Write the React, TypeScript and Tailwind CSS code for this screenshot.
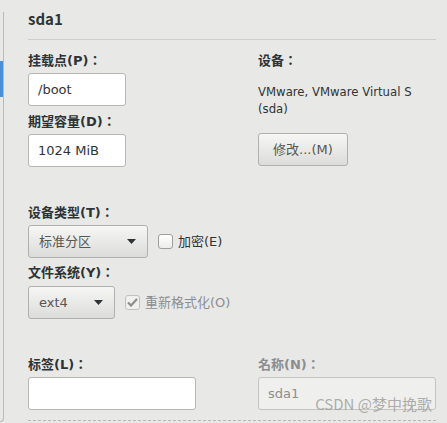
import React from "react";

const font = { fontFamily: '"DejaVu Sans", "Noto Sans CJK SC", sans-serif' };
const labelFont = { fontFamily: '"DejaVu Sans", "Noto Sans CJK JP", sans-serif' };
const cjkFont = { fontFamily: '"Noto Sans CJK SC", sans-serif' };

function Label({ children, muted }: { children: React.ReactNode; muted?: boolean }) {
  return (
    <div
      style={labelFont}
      className={`h-[18px] text-[13px] leading-[18px] font-bold ${muted ? "text-[#8b8e8f]" : "text-[#2e3436]"}`}
    >
      {children}
    </div>
  );
}

function Entry({ value, width, disabled }: { value: string; width: string; disabled?: boolean }) {
  return (
    <div
      className={`${width} flex h-[33px] items-center rounded-[3px] border px-[9px] text-[13px] ${
        disabled
          ? "border-[#c4c4c1] bg-[#efefee] text-[#8b8e8f]"
          : "border-[#b6b6b3] bg-white text-[#2e3436]"
      }`}
    >
      {value}
    </div>
  );
}

function Combo({ value, width }: { value: string; width: string }) {
  return (
    <div
      className={`${width} flex h-[33px] items-center justify-between rounded-[3px] border border-[#b0b0ad] bg-gradient-to-b from-[#f6f6f5] to-[#dcdcda] pl-[10px] pr-[11px] text-[13px] text-[#555753]`}
    >
      <span>{value}</span>
      <svg width="9" height="5" viewBox="0 0 9 5">
        <path d="M0 0h9L4.5 5z" fill="#2e3436" />
      </svg>
    </div>
  );
}

function Check({ checked, label }: { checked?: boolean; label: string }) {
  return (
    <div className="flex items-center gap-[5px]">
      <div
        className={`flex h-[15px] w-[15px] items-center justify-center rounded-[3px] border ${
          checked ? "border-[#c0c0bd] bg-[#f0f0ef]" : "border-[#9e9e9b] bg-gradient-to-b from-white to-[#ececea]"
        }`}
      >
        {checked && (
          <svg width="11" height="9" viewBox="0 0 11 9">
            <path d="M1 4.5l3 3L10 1" stroke="#8b8e8f" strokeWidth="2.2" fill="none" />
          </svg>
        )}
      </div>
      <span className={`text-[13px] ${checked ? "text-[#8b8e8f]" : "text-[#2e3436]"}`}>{label}</span>
    </div>
  );
}

export default function App() {
  return (
    <div className="relative flex h-[423px] w-[447px] overflow-hidden bg-[#e8e8e7]" style={font}>
      <div className="mt-[12px] h-[410px] w-[4px] rounded-br-[4px] border-r border-b border-[#b9b9b6]">
        <div className="mt-[49px] h-[36px] w-[3px] bg-[#4a90d9]" />
      </div>

      <main className="flex flex-1 flex-col pl-[24px] pr-[11px]">
        <h1 style={cjkFont} className="mt-[9px] h-[20px] text-[15px] leading-[20px] font-bold text-[#2e3436]">
          sda1
        </h1>
        <div className="mt-[10px] h-px bg-[#cdcdca]" />

        <div className="mt-[12px] flex">
          <div className="w-[230px]">
            <Label>挂载点(P)：</Label>
            <div className="mt-[3px]">
              <Entry value="/boot" width="w-[98px]" />
            </div>
            <div className="mt-[7px]">
              <Label>期望容量(D)：</Label>
            </div>
            <div className="mt-[3px]">
              <Entry value="1024 MiB" width="w-[98px]" />
            </div>
          </div>
          <div className="flex-1">
            <Label>设备：</Label>
            <p className="mt-[14px] text-[11.7px] leading-[17px] text-[#2e3436]">
              VMware, VMware Virtual S
              <br />
              (sda)
            </p>
            <button className="mt-[15px] flex h-[33px] w-[90px] items-center justify-center rounded-[3px] border border-[#b0b0ad] bg-gradient-to-b from-[#f6f6f5] to-[#dcdcda] text-[13px] text-[#555753]">
              修改...(M)
            </button>
          </div>
        </div>

        <div className="mt-[37px]">
          <Label>设备类型(T)：</Label>
        </div>
        <div className="mt-[3px] flex items-center gap-[10px]">
          <Combo value="标准分区" width="w-[120px]" />
          <Check label="加密(E)" />
        </div>
        <div className="mt-[6px]">
          <Label>文件系统(Y)：</Label>
        </div>
        <div className="mt-[4px] flex items-center gap-[10px]">
          <Combo value="ext4" width="w-[87px]" />
          <Check checked label="重新格式化(O)" />
        </div>

        <div className="mt-[37px] flex">
          <div className="w-[230px]">
            <Label>标签(L)：</Label>
            <div className="mt-[3px]">
              <Entry value="" width="w-[168px]" />
            </div>
          </div>
          <div className="flex-1">
            <Label muted>名称(N)：</Label>
            <div className="mt-[3px]">
              <Entry value="sda1" width="w-full" disabled />
            </div>
          </div>
        </div>

        <div className="mt-[10px] border-t border-dashed border-[#b9b9b6]" />
      </main>

      <div style={cjkFont} className="absolute right-[15px] bottom-[8px] text-[15px] text-[#9a9a98]/80">
        CSDN @梦中挽歌
      </div>
    </div>
  );
}
